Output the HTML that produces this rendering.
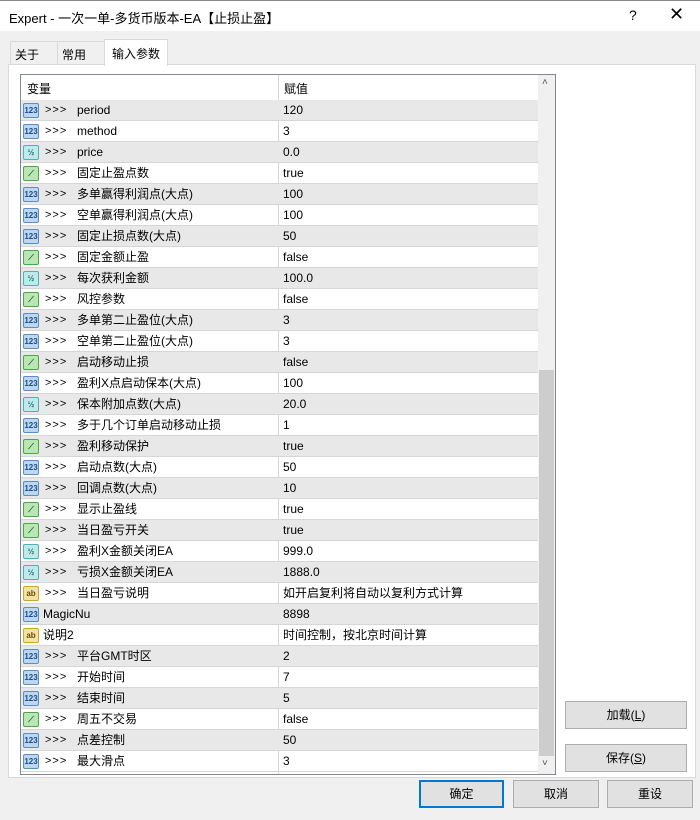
<!DOCTYPE html>
<html><head><meta charset="utf-8"><style>
*{margin:0;padding:0;box-sizing:border-box}
body{width:700px;height:820px;background:#f0f0f0;position:relative;overflow:hidden;font-family:"Liberation Sans","Noto Sans CJK SC",sans-serif;font-size:12px;color:#000}
.abs{position:absolute}
#title{left:0;top:0;width:700px;height:31px;background:#fff;border-top:1px solid #888}
#title .t{left:9px;top:7px;font-size:13px}
.tab{top:41px;height:24px;border:1px solid #d9d9d9;border-bottom:none;background:#f0f0f0;padding:4px 0 0 4px;font-size:12px}
#panel{left:8px;top:64px;width:688px;height:714px;background:#fff;border:1px solid #d9d9d9}
#tbl{left:20px;top:74px;width:536px;height:701px;border:1px solid #828790;background:#fff;overflow:hidden}
.hdr{left:0;top:0;width:517px;height:25px;background:#fff}
.row{position:absolute;left:0;width:517px;height:21px;border-bottom:1px solid #d6d6d6;line-height:20px}
.row.s{background:#e8e8e8}
.row span{position:absolute;top:0;white-space:nowrap;line-height:20px}
.row .n{left:56px}
.row .g{left:24px;letter-spacing:1px;font-size:11px}
.row .v{left:262px}
.row .ic{position:absolute;left:2px;top:3px;width:16px;height:15px;border-radius:2px;font-size:8px;line-height:13px;text-align:center;font-weight:bold}
.i1{background:#bcd7ef;border:1px solid #5a8ec4;color:#1c4f8e}
.i2{background:#bfeaea;border:1px solid #4fb0b8;color:#1d6f7a}
.i3{background:#b9e6b4;border:1px solid #4aa84a;color:#1c6a1c}
.i4{background:#f2e3a2;border:1px solid #c7a634;color:#6a4c00}
.vl{position:absolute;left:257px;top:0;width:1px;height:700px;background:#d6d6d6}
#sb{left:517px;top:0;width:17px;height:699px;background:#f0f0f0}
#thumb{left:518px;top:295px;width:15px;height:386px;background:#cdcdcd}
.btn{height:28px;border:1px solid #adadad;background:#e1e1e1;text-align:center;line-height:26px;font-size:12px}
</style></head><body>
<div id="title" class="abs"><div class="t abs">Expert - 一次一单-多货币版本-EA【止损止盈】</div>
<div class="abs" style="left:629px;top:6px;font-size:14px">?</div>
<div class="abs" style="left:669px;top:3px;font-size:18px;font-weight:300">✕</div></div>
<div class="tab abs" style="left:10px;width:48px">关于</div>
<div class="tab abs" style="left:57px;width:48px">常用</div>
<div id="panel" class="abs"></div>
<div class="tab abs" style="left:104px;width:64px;top:39px;height:27px;background:#fff;padding-top:5px;padding-left:7px">输入参数</div>
<div id="tbl" class="abs">
<div class="hdr abs"><span class="abs" style="left:6px;top:5px">变量</span><span class="abs" style="left:263px;top:5px">赋值</span></div>
<div class="vl"></div>
<div id="rows"></div>
<div id="sb" class="abs"><div class="abs" style="left:4px;top:2px;font-size:10px;color:#555">˄</div><div class="abs" style="left:4px;top:683px;font-size:10px;color:#555">˅</div></div>
<div id="thumb" class="abs"></div>
</div>
<div class="btn abs" style="left:565px;top:701px;width:122px">加载(<u>L</u>)</div>
<div class="btn abs" style="left:565px;top:744px;width:122px">保存(<u>S</u>)</div>
<div class="btn abs" style="left:419px;top:780px;width:85px;border:2px solid #0078d7;line-height:24px">确定</div>
<div class="btn abs" style="left:513px;top:780px;width:86px">取消</div>
<div class="btn abs" style="left:607px;top:780px;width:86px">重设</div>
<script>
var d=[[1,'period','120'],[1,'method','3'],[2,'price','0.0'],[3,'固定止盈点数','true'],[1,'多单赢得利润点(大点)','100'],[1,'空单赢得利润点(大点)','100'],[1,'固定止损点数(大点)','50'],[3,'固定金额止盈','false'],[2,'每次获利金额','100.0'],[3,'风控参数','false'],[1,'多单第二止盈位(大点)','3'],[1,'空单第二止盈位(大点)','3'],[3,'启动移动止损','false'],[1,'盈利X点启动保本(大点)','100'],[2,'保本附加点数(大点)','20.0'],[1,'多于几个订单启动移动止损','1'],[3,'盈利移动保护','true'],[1,'启动点数(大点)','50'],[1,'回调点数(大点)','10'],[3,'显示止盈线','true'],[3,'当日盈亏开关','true'],[2,'盈利X金额关闭EA','999.0'],[2,'亏损X金额关闭EA','1888.0'],[4,'当日盈亏说明','如开启复利将自动以复利方式计算'],[1,'MagicNu','8898',1],[4,'说明2','时间控制，按北京时间计算',1],[1,'平台GMT时区','2'],[1,'开始时间','7'],[1,'结束时间','5'],[3,'周五不交易','false'],[1,'点差控制','50'],[1,'最大滑点','3']];
var lab={1:'123',2:'½',3:'⟋',4:'ab'},h='';
d.forEach(function(r,i){h+='<div class="row'+(i%2==0?' s':'')+'" style="top:'+(25+i*21)+'px"><div class="ic i'+r[0]+'">'+lab[r[0]]+'</div>'+(r[3]?'<span class="n" style="left:22px">'+r[1]+'</span>':'<span class="g">&gt;&gt;&gt;</span><span class="n">'+r[1]+'</span>')+'<span class="v">'+r[2]+'</span></div>'});
document.getElementById('rows').innerHTML=h;
</script>
</body></html>
